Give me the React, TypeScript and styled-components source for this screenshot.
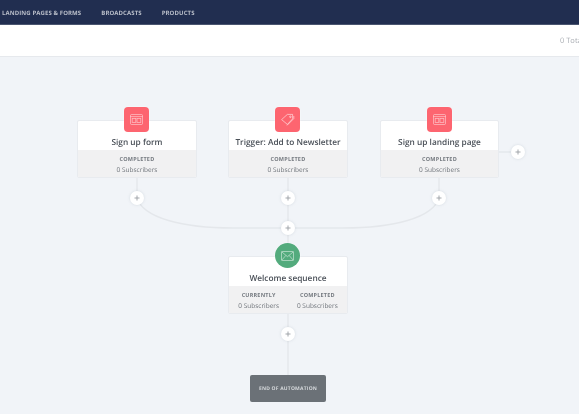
import * as React from 'react';
import styled, { createGlobalStyle } from 'styled-components';

const GlobalStyle = createGlobalStyle`
    html, body {
        margin: 0;
        height: 100%;
        overflow: hidden;
        background: #f1f4f8;
        font-family: 'Open Sans', Lato, 'Liberation Sans', sans-serif;
        text-rendering: geometricPrecision;
    }
`;

const Page = styled.div`
    width: 579px;
    height: 414px;
    display: flex;
    flex-direction: column;
    overflow: hidden;
    filter: blur(0.3px);
`;

const Nav = styled.nav`
    height: 25px;
    flex: none;
    display: flex;
    align-items: center;
    gap: 20px;
    padding-left: 2px;
    background: #212e50;
    box-shadow: inset 0 -1px 0 #4a5570;
`;

const NavLink = styled.span`
    font-size: 6px;
    font-weight: 700;
    letter-spacing: 0.1px;
    color: #b9bec9;
    white-space: nowrap;
`;

const SubBar = styled.div`
    height: 32px;
    flex: none;
    display: flex;
    align-items: center;
    padding-left: 560px;
    background: #fff;
    border-bottom: 1px solid #e6e9ed;
    box-sizing: border-box;
`;

const Total = styled.span`
    font-size: 7.5px;
    color: #a9adb3;
    white-space: nowrap;
`;

const Canvas = styled.main`
    position: relative;
    flex: 1;
    background: #f1f4f8;
`;

const Wires = styled.svg`
    position: absolute;
    left: 0;
    top: 0;
`;

const Card = styled.section<{ $x: number; $y: number }>`
    position: absolute;
    left: ${p => p.$x}px;
    top: ${p => p.$y}px;
    width: 119.4px;
    height: 58.2px;
    display: flex;
    flex-direction: column;
    box-sizing: border-box;
    border: 1px solid #e8ebef;
    border-radius: 2px;
    background: #fff;
    overflow: hidden;
`;

const CardTitle = styled.h3`
    height: 29.5px;
    flex: none;
    margin: 0;
    padding-top: 14px;
    box-sizing: border-box;
    display: flex;
    align-items: center;
    justify-content: center;
    font-size: 8.3px;
    font-weight: 600;
    color: #4a5058;
    white-space: nowrap;
`;

const Stats = styled.div`
    flex: 1;
    display: flex;
    justify-content: center;
    background: #f1f1f2;
`;

const Stat = styled.div`
    flex: 1;
    display: flex;
    flex-direction: column;
    align-items: center;
    gap: 2px;
    padding-top: 5px;
`;

const StatLabel = styled.span`
    font-size: 5.5px;
    line-height: 8px;
    font-weight: 700;
    letter-spacing: 0.2px;
    color: #777c82;
`;

const StatValue = styled.span`
    font-size: 6.5px;
    line-height: 10px;
    color: #6f747a;
    white-space: nowrap;
`;

const IconTile = styled.div<{ $x: number; $y: number; $round?: boolean }>`
    position: absolute;
    left: ${p => p.$x}px;
    top: ${p => p.$y}px;
    width: 25px;
    height: 25px;
    display: flex;
    align-items: center;
    justify-content: center;
    border-radius: ${p => (p.$round ? '50%' : '4px')};
    background: ${p => (p.$round ? '#53ab7d' : '#fd6570')};
    box-shadow: 0 0 0 0.5px rgba(255, 255, 255, 0.5);
`;

const AddButton = styled.button<{ $x: number; $y: number }>`
    position: absolute;
    left: ${p => p.$x - 7}px;
    top: ${p => p.$y - 7}px;
    width: 14px;
    height: 14px;
    padding: 0;
    display: flex;
    align-items: center;
    justify-content: center;
    border: 0;
    border-radius: 50%;
    background: #fff;
    box-shadow: 0 0 3px rgba(120, 130, 145, 0.22);
`;

const EndBox = styled.div`
    position: absolute;
    left: 250px;
    top: 318px;
    width: 76px;
    height: 27px;
    display: flex;
    align-items: center;
    justify-content: center;
    border-radius: 2px;
    background: #6b7177;
    font-size: 5px;
    font-weight: 700;
    letter-spacing: 0.2px;
    color: #d5d8db;
    white-space: nowrap;
`;

const WindowIcon = () => (
    <svg width="13" height="11" viewBox="0 0 13 11" fill="none" stroke="#fff" strokeOpacity="0.55" strokeWidth="0.8">
        <rect x="0.5" y="0.5" width="12" height="10" rx="1" />
        <path d="M0.5 2.6h12" />
        <rect x="2.2" y="4.4" width="3.6" height="4" />
        <rect x="7" y="4.4" width="3.8" height="4" />
    </svg>
);

const TagIcon = () => (
    <svg width="15" height="15" viewBox="0 0 15 15" fill="none" stroke="#fff" strokeOpacity="0.6" strokeWidth="0.9" strokeLinejoin="round">
        <path d="M1.6 7.6 7.4 2.4h5.2v4.4l-5.2 5.6-5.8-4.8Z" />
        <path d="M7 13.4l6.8-6.8V4" />
        <circle cx="10.4" cy="4.8" r="0.8" />
    </svg>
);

const MailIcon = () => (
    <svg width="13" height="10" viewBox="0 0 13 10" fill="none" stroke="#fff" strokeOpacity="0.6" strokeWidth="0.8" strokeLinejoin="round">
        <rect x="0.5" y="0.5" width="12" height="9" rx="0.6" />
        <path d="m0.8 0.9 5.7 4.8 5.7-4.8M0.8 9.1l4-4.6M12.2 9.1l-4-4.6" />
    </svg>
);

const PlusIcon = () => (
    <svg width="6" height="6" viewBox="0 0 6 6" stroke="#989da3" strokeWidth="0.9">
        <path d="M3 0.5v5M0.5 3h5" />
    </svg>
);

interface IStat {
    label: string;
    value: string;
}

interface INode {
    title: string;
    x: number;
    y: number;
    icon: React.ReactNode;
    round?: boolean;
    stats: IStat[];
}

const completed: IStat = { label: 'COMPLETED', value: '0 Subscribers' };

const nodes: INode[] = [
    { title: 'Sign up form', x: 77.3, y: 62.5, icon: <WindowIcon />, stats: [completed] },
    { title: 'Trigger: Add to Newsletter', x: 228.3, y: 62.5, icon: <TagIcon />, stats: [completed] },
    { title: 'Sign up landing page', x: 379.8, y: 62.5, icon: <WindowIcon />, stats: [completed] },
    {
        title: 'Welcome sequence',
        x: 228.3,
        y: 198.5,
        icon: <MailIcon />,
        round: true,
        stats: [{ label: 'CURRENTLY', value: '0 Subscribers' }, completed],
    },
];

// plus buttons, canvas coordinates
const addButtons = [
    [137, 141],
    [288, 141],
    [439, 141],
    [288, 171],
    [288, 277],
    [518, 95],
];

const App: React.FunctionComponent = () => {
    return (
        <Page>
            <GlobalStyle />
            <Nav>
                <NavLink>LANDING PAGES &amp; FORMS</NavLink>
                <NavLink>BROADCASTS</NavLink>
                <NavLink>PRODUCTS</NavLink>
            </Nav>
            <SubBar>
                <Total>0 Total</Total>
            </SubBar>
            <Canvas>
                <Wires width="579" height="357" fill="none" stroke="#e4e7eb" strokeWidth="1.4">
                    <path d="M137 120v21M288 120v200M439 120v21M498 95h20" />
                    <path d="M137 141c6 20 46 30 96 30h110c50 0 90-10 96-30" />
                </Wires>
                {nodes.map(node => (
                    <React.Fragment key={node.title}>
                        <Card $x={node.x} $y={node.y}>
                            <CardTitle>{node.title}</CardTitle>
                            <Stats>
                                {node.stats.map(stat => (
                                    <Stat key={stat.label}>
                                        <StatLabel>{stat.label}</StatLabel>
                                        <StatValue>{stat.value}</StatValue>
                                    </Stat>
                                ))}
                            </Stats>
                        </Card>
                        <IconTile $x={node.x + 47} $y={node.y - 12.2} $round={node.round}>
                            {node.icon}
                        </IconTile>
                    </React.Fragment>
                ))}
                {addButtons.map(([x, y]) => (
                    <AddButton key={`${x}-${y}`} $x={x} $y={y}>
                        <PlusIcon />
                    </AddButton>
                ))}
                <EndBox>END OF AUTOMATION</EndBox>
            </Canvas>
        </Page>
    );
};

export default App;
